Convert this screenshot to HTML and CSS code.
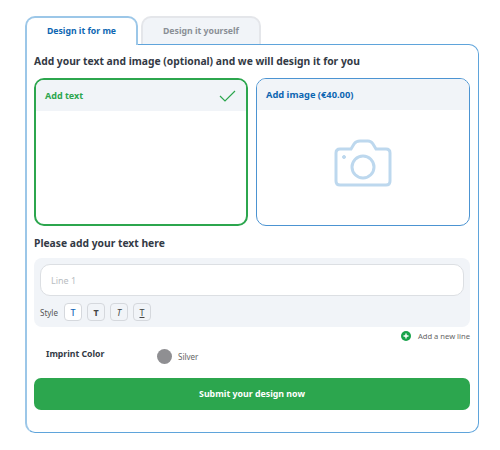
FILE: index.html
```html
<!DOCTYPE html>
<html lang="en">
<head>
    <meta charset="UTF-8">
    <title>Design it for me</title>
    <link rel="stylesheet" href="styles.css">
</head>
<body>
    <div class="designer">
        <div class="tabs">
            <div class="tab active">Design it for me</div>
            <div class="tab">Design it yourself</div>
        </div>

        <div class="panel">
            <h2 class="panel-title">Add your text and image (optional) and we will design it for you</h2>

            <div class="cards">
                <div class="card selected">
                    <div class="card-head">
                        <span>Add text</span>
                        <svg class="check" width="17" height="12" viewBox="0 0 17 12" fill="none">
                            <path d="M1 6L6 11L16 1" stroke="#2ca64e" stroke-width="1.2"/>
                        </svg>
                    </div>
                </div>
                <div class="card">
                    <div class="card-head">
                        <span>Add image (€40.00)</span>
                    </div>
                    <div class="card-body">
                        <svg width="58" height="48" viewBox="0 0 58 48" fill="none" stroke="#bdd8ee" stroke-width="3">
                            <path d="M6 10H17L20 5Q22 2 26 2H34Q37 2 39 5L42 10H52Q56 10 56 14V42Q56 46 52 46H6Q2 46 2 42V14Q2 10 6 10Z"/>
                            <circle cx="29" cy="28" r="11"/>
                            <circle cx="10" cy="18" r="1.5" fill="#bdd8ee" stroke-width="1"/>
                        </svg>
                    </div>
                </div>
            </div>

            <h3 class="section-title">Please add your text here</h3>

            <div class="text-box">
                <input class="line-input" type="text" placeholder="Line 1">
                <div class="style-row">
                    <span class="style-label">Style</span>
                    <button class="style-btn on">T</button>
                    <button class="style-btn bold">T</button>
                    <button class="style-btn italic">T</button>
                    <button class="style-btn under">T</button>
                </div>
            </div>

            <div class="add-line">
                <svg width="10" height="10" viewBox="0 0 10 10">
                    <circle cx="5" cy="5" r="5" fill="#17a24a"/>
                    <path d="M5 2.5V7.5M2.5 5H7.5" stroke="#fff" stroke-width="1.4"/>
                </svg>
                <span>Add a new line</span>
            </div>

            <div class="imprint">
                <span class="imprint-label">Imprint Color</span>
                <span class="swatch"></span>
                <span class="swatch-name">Silver</span>
            </div>

            <button class="submit-btn">Submit your design now</button>
        </div>
    </div>
</body>
</html>
```

FILE: styles.css
```css
* {
    margin: 0;
    padding: 0;
    box-sizing: border-box;
}

body {
    font-family: "Noto Sans", sans-serif;
    background: white;
    color: #333a45;
}

.designer {
    width: 454px;
    margin: 16px 0 0 25px;
}

.tabs {
    display: flex;
    gap: 3px;
    height: 29px;
    position: relative;
    z-index: 1;
}

.tab {
    width: 120px;
    height: 28px;
    background: #f1f4f8;
    border: 2px solid #e4e6ea;
    border-bottom: none;
    border-radius: 10px 10px 0 0;
    color: #8a8f96;
    font-size: 8.7px;
    font-weight: 700;
    line-height: 27px;
    text-align: center;
}

.tab.active {
    width: 113px;
    height: 29px;
    background: white;
    border-color: #9cc7e8;
    color: #0d66b2;
}

.panel {
    height: 389px;
    margin-top: -1px;
    padding: 9px 8px 0 7px;
    border: 1px solid #5fa4db;
    border-left: 2px solid #9cc7e8;
    border-radius: 0 10px 10px 10px;
}

.panel-title,
.section-title {
    font-size: 10.3px;
    font-weight: 700;
    line-height: 14px;
}

.cards {
    display: flex;
    gap: 8px;
    margin-top: 10px;
}

.card {
    width: 214px;
    height: 148px;
    border: 1px solid #4c94d2;
    border-radius: 10px;
    overflow: hidden;
}

.card.selected {
    border: 2px solid #2ca64e;
}

.card-head {
    display: flex;
    align-items: center;
    justify-content: space-between;
    height: 31px;
    padding: 0 10px 0 9px;
    background: #f1f4f8;
    color: #0d66b2;
    font-size: 9.3px;
    font-weight: 700;
}

.card.selected .card-head {
    color: #2ca64e;
    font-size: 9px;
}

.card-body {
    display: flex;
    justify-content: center;
    padding: 29px 1px 0 0;
}

.section-title {
    margin-top: 10px;
}

.text-box {
    height: 69px;
    margin-top: 8px;
    padding: 6px;
    background: #f1f4f8;
    border-radius: 8px;
}

.line-input {
    display: block;
    width: 100%;
    height: 32px;
    padding: 0 10px;
    background: white;
    border: 1px solid #dcdfe3;
    border-radius: 10px;
    font-family: inherit;
    font-size: 9px;
}

.line-input::placeholder {
    color: #b9bdc2;
}

.style-row {
    display: flex;
    align-items: center;
    gap: 5px;
    margin-top: 7px;
}

.style-label {
    width: 19px;
    color: #555;
    font-size: 8px;
}

.style-btn {
    width: 18px;
    height: 18px;
    background: #f1f4f8;
    border: 1px solid #d5d8dd;
    border-radius: 4px;
    color: #444;
    font-family: inherit;
    font-size: 9px;
}

.style-btn.on {
    background: white;
    color: #1565b8;
    font-weight: 500;
}

.style-btn.bold {
    font-weight: 700;
}

.style-btn.italic {
    font-style: italic;
}

.style-btn.under {
    text-decoration: underline;
}

.add-line {
    display: flex;
    align-items: center;
    justify-content: flex-end;
    gap: 7px;
    margin-top: 4px;
    color: #666;
    font-size: 7.6px;
}

.imprint {
    display: flex;
    align-items: center;
    height: 16px;
    margin-top: 7px;
    padding-left: 12px;
}

.imprint-label {
    width: 111px;
    font-size: 8.7px;
    font-weight: 700;
    margin-top: -4px;
}

.swatch {
    width: 15px;
    height: 15px;
    margin-right: 6px;
    background: #8f8f92;
    border-radius: 50%;
}

.swatch-name {
    color: #666;
    font-size: 8px;
}

.submit-btn {
    display: block;
    width: 100%;
    height: 32px;
    margin-top: 14px;
    background: #2ca64e;
    border: none;
    border-radius: 7px;
    color: white;
    font-family: inherit;
    font-size: 8.8px;
    font-weight: 700;
}
```
